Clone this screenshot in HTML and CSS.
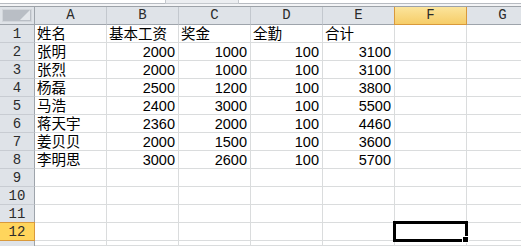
FILE: index.html
```html
<!DOCTYPE html>
<html lang="zh-CN">
<head>
    <meta charset="UTF-8">
    <title>工资表 - Sheet1</title>
    <link rel="stylesheet" href="styles.css">
</head>
<body>

    <!-- Bottom edge of the formula bar -->
    <div class="formula-edge">
        <div class="formula-tab"></div>
    </div>

    <!-- Worksheet grid -->
    <div class="sheet">
        <div class="corner"><span class="corner-tri"></span></div>
        <div class="hd">A</div>
        <div class="hd">B</div>
        <div class="hd">C</div>
        <div class="hd">D</div>
        <div class="hd">E</div>
        <div class="hd active">F</div>
        <div class="hd">G</div>

        <div class="rh">1</div>
        <div class="cell">姓名</div>
        <div class="cell">基本工资</div>
        <div class="cell">奖金</div>
        <div class="cell">全勤</div>
        <div class="cell">合计</div>
        <div class="cell"></div>
        <div class="cell"></div>

        <div class="rh">2</div>
        <div class="cell">张明</div>
        <div class="cell num">2000</div>
        <div class="cell num">1000</div>
        <div class="cell num">100</div>
        <div class="cell num">3100</div>
        <div class="cell"></div>
        <div class="cell"></div>

        <div class="rh">3</div>
        <div class="cell">张烈</div>
        <div class="cell num">2000</div>
        <div class="cell num">1000</div>
        <div class="cell num">100</div>
        <div class="cell num">3100</div>
        <div class="cell"></div>
        <div class="cell"></div>

        <div class="rh">4</div>
        <div class="cell">杨磊</div>
        <div class="cell num">2500</div>
        <div class="cell num">1200</div>
        <div class="cell num">100</div>
        <div class="cell num">3800</div>
        <div class="cell"></div>
        <div class="cell"></div>

        <div class="rh">5</div>
        <div class="cell">马浩</div>
        <div class="cell num">2400</div>
        <div class="cell num">3000</div>
        <div class="cell num">100</div>
        <div class="cell num">5500</div>
        <div class="cell"></div>
        <div class="cell"></div>

        <div class="rh">6</div>
        <div class="cell">蒋天宇</div>
        <div class="cell num">2360</div>
        <div class="cell num">2000</div>
        <div class="cell num">100</div>
        <div class="cell num">4460</div>
        <div class="cell"></div>
        <div class="cell"></div>

        <div class="rh">7</div>
        <div class="cell">姜贝贝</div>
        <div class="cell num">2000</div>
        <div class="cell num">1500</div>
        <div class="cell num">100</div>
        <div class="cell num">3600</div>
        <div class="cell"></div>
        <div class="cell"></div>

        <div class="rh">8</div>
        <div class="cell">李明思</div>
        <div class="cell num">3000</div>
        <div class="cell num">2600</div>
        <div class="cell num">100</div>
        <div class="cell num">5700</div>
        <div class="cell"></div>
        <div class="cell"></div>

        <div class="rh">9</div>
        <div class="cell"></div>
        <div class="cell"></div>
        <div class="cell"></div>
        <div class="cell"></div>
        <div class="cell"></div>
        <div class="cell"></div>
        <div class="cell"></div>

        <div class="rh">10</div>
        <div class="cell"></div>
        <div class="cell"></div>
        <div class="cell"></div>
        <div class="cell"></div>
        <div class="cell"></div>
        <div class="cell"></div>
        <div class="cell"></div>

        <div class="rh">11</div>
        <div class="cell"></div>
        <div class="cell"></div>
        <div class="cell"></div>
        <div class="cell"></div>
        <div class="cell"></div>
        <div class="cell"></div>
        <div class="cell"></div>

        <div class="rh active">12</div>
        <div class="cell"></div>
        <div class="cell"></div>
        <div class="cell"></div>
        <div class="cell"></div>
        <div class="cell"></div>
        <div class="cell selected"><span class="fill-handle"></span></div>
        <div class="cell"></div>

        <div class="rh short"></div>
        <div class="cell"></div>
        <div class="cell"></div>
        <div class="cell"></div>
        <div class="cell"></div>
        <div class="cell"></div>
        <div class="cell"></div>
        <div class="cell"></div>
    </div>

</body>
</html>
```

FILE: styles.css
```css
/* Global Styles */
body {
    margin: 0;
    padding: 0;
    background-color: #ffffff;
    overflow: hidden;
    height: 246px;
    font-family: "Liberation Sans", "Noto Sans CJK SC", sans-serif;
    color: #000;
}

/* Strip left over from the formula bar */
.formula-edge {
    height: 7px;
    box-sizing: border-box;
    border-bottom: 1px solid #9da2a8;
    background-color: #f3f4f6;
    position: relative;
}

.formula-edge::before {
    content: "";
    display: block;
    height: 3px;
    background-color: #ffffff;
    border-bottom: 1px solid #b7bbc1;
}

.formula-tab {
    position: absolute;
    left: 165px;
    top: 0;
    width: 72px;
    height: 3px;
    background-color: #eceef1;
    border: 1px solid #c4c8cd;
    border-top: none;
}

/* Worksheet grid */
.sheet {
    display: grid;
    grid-template-columns: 35px repeat(6, 72px) 72px;
    grid-template-rows: repeat(13, 18px) 5px;
    overflow: hidden;
}

.cell {
    box-sizing: border-box;
    border-right: 1px solid #dadcdd;
    border-bottom: 1px solid #dadcdd;
    font-size: 14.5px;
    line-height: 17px;
    padding: 1px 0 0 2px;
    white-space: nowrap;
    position: relative;
}

.cell.num {
    text-align: right;
    padding-right: 3px;
}

/* Column and row headers */
.corner,
.hd,
.rh {
    box-sizing: border-box;
    background-color: #dfe3e8;
    color: #2b2b2b;
    font-family: "Liberation Mono", "DejaVu Sans Mono", monospace;
    font-size: 14px;
    text-align: center;
}

.hd {
    line-height: 17px;
    border-right: 1px solid #c3c8ce;
    border-bottom: 1px solid #9ea4ab;
}

.rh {
    line-height: 18px;
    border-right: 1px solid #9ea4ab;
    border-bottom: 1px solid #c8ccd2;
}

.rh.short {
    border-bottom: none;
}

.corner {
    border-right: 1px solid #9ea4ab;
    border-bottom: 1px solid #9ea4ab;
    padding: 2px;
}

.corner-tri {
    display: block;
    height: 100%;
    box-sizing: border-box;
    background-color: #b9bec5;
    border: 1px solid #d2d6db;
    position: relative;
}

.corner-tri::after {
    content: "";
    position: absolute;
    right: 1px;
    bottom: 1px;
    border-left: 10px solid transparent;
    border-bottom: 10px solid #e4e7eb;
}

/* Highlight for the active column / row */
.hd.active {
    background: linear-gradient(#fbe49c, #f6cd68);
    border: 1px solid #d9993b;
    border-top: none;
    margin-left: -1px;
}

.rh.active {
    background-color: #ffd55c;
    border: 1px solid #d9993b;
    border-left: none;
    margin-top: -1px;
    height: 19px;
}

/* Active cell F12 */
.selected {
    z-index: 2;
}

.selected::after {
    content: "";
    position: absolute;
    left: -2px;
    top: -2px;
    width: 75px;
    height: 21px;
    box-sizing: border-box;
    border: 3px solid #000;
}

.fill-handle {
    position: absolute;
    right: -3px;
    bottom: -3px;
    width: 5px;
    height: 5px;
    background-color: #000;
    border: 1px solid #fff;
    z-index: 3;
}
```
